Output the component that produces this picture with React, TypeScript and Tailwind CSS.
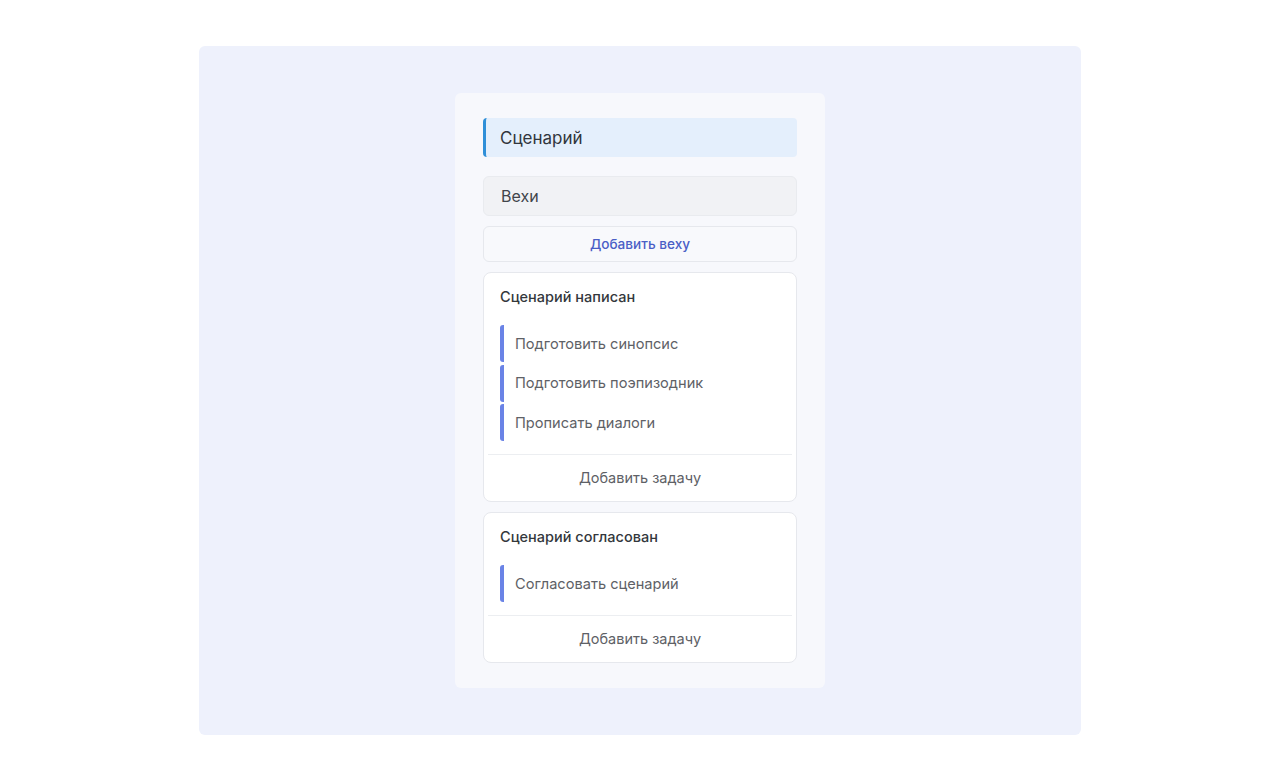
const MILESTONES = [
  {
    title: "Сценарий написан",
    tasks: ["Подготовить синопсис", "Подготовить поэпизодник", "Прописать диалоги"],
  },
  {
    title: "Сценарий согласован",
    tasks: ["Согласовать сценарий"],
  },
];

export default function App() {
  return (
    <div className="min-h-screen bg-white pt-[46px] font-['Inter','Noto_Sans',sans-serif]">
      <div className="mx-auto w-[882px] rounded-md bg-[#eef1fc] py-[47px]">
        <div className="mx-auto w-[370px] rounded-md bg-[#f7f8fc] px-[28px] pt-[25px] pb-[25px]">
          {/* Section header */}
          <div className="flex h-[39px] items-center rounded border-l-[3px] border-[#2f8fd8] bg-[#e4effc] pt-[2px] pl-[14px] text-[17px] text-[#31363d]">
            Сценарий
          </div>

          <div className="mt-[19px] flex h-[40px] items-center rounded-md border border-[#e9ebef] bg-[#f1f2f5] pl-[17px] text-[16px] text-[#41454b]">
            Вехи
          </div>

          <button className="mt-[10px] flex h-[36px] w-full items-center justify-center rounded-md border border-[#e6e8ed] bg-[#f8f9fc] text-[13.6px] font-medium text-[#4a5ec6]">
            Добавить веху
          </button>

          <div className="mt-[10px] flex flex-col gap-[10px]">
            {MILESTONES.map((m) => (
              <div key={m.title} className="rounded-lg border border-[#e6e8ed] bg-white">
                <div className="px-[16px] pt-[14px]">
                  <p className="text-[14.5px] leading-[20px] font-medium text-[#33373c]">{m.title}</p>
                  <div className="mt-[18px] flex flex-col gap-[2.5px]">
                    {m.tasks.map((t) => (
                      <div
                        key={t}
                        className="flex h-[37px] items-center rounded-[3px] border-l-4 border-[#6a83e6] pt-[2px] pl-[11px] text-[14.6px] text-[#5e6166]"
                      >
                        {t}
                      </div>
                    ))}
                  </div>
                </div>
                <div className="mx-[4px] mt-[13px] border-t border-[#eceef1]" />
                <button className="flex h-[46px] w-full items-center justify-center text-[14.5px] text-[#5e6166]">
                  Добавить задачу
                </button>
              </div>
            ))}
          </div>
        </div>
      </div>
    </div>
  );
}
